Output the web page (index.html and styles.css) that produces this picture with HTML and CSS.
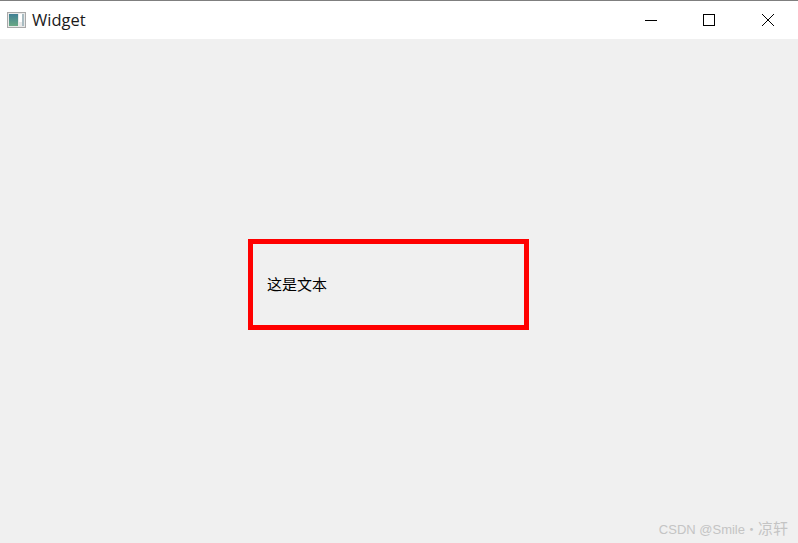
FILE: index.html
```html
<!DOCTYPE html>
<html lang="zh-CN">
<head>
    <meta charset="UTF-8">
    <title>Widget</title>
    <link rel="stylesheet" href="styles.css">
</head>
<body>

    <div class="window">
        <div class="titlebar">
            <svg class="app-icon" width="20" height="16" viewBox="0 0 20 16">
                <defs>
                    <linearGradient id="iconFill" x1="0" y1="0" x2="0" y2="1">
                        <stop offset="0" stop-color="#3f7f94"/>
                        <stop offset="1" stop-color="#6aa884"/>
                    </linearGradient>
                </defs>
                <rect x="0.5" y="0.5" width="18" height="15" fill="#e9e9e9" stroke="#a9a9a9"/>
                <rect x="2" y="2" width="9" height="12" fill="url(#iconFill)"/>
                <rect x="12" y="2" width="3" height="8" fill="#ffffff"/>
                <rect x="15" y="2" width="2" height="12" fill="#a9bcc2"/>
            </svg>
            <span class="title">Widget</span>
            <div class="controls">
                <div class="control">
                    <svg width="12" height="12" viewBox="0 0 12 12"><path d="M0 6.5H12" stroke="#000" fill="none"/></svg>
                </div>
                <div class="control">
                    <svg width="12" height="12" viewBox="0 0 12 12"><rect x="0.5" y="0.5" width="11" height="11" stroke="#000" fill="none"/></svg>
                </div>
                <div class="control close">
                    <svg width="12" height="12" viewBox="0 0 12 12"><path d="M0 0L12 12M12 0L0 12" stroke="#000" fill="none"/></svg>
                </div>
            </div>
        </div>
        <div class="client">
            <div class="label-box">这是文本</div>
        </div>
        <div class="watermark">CSDN @Smile・<span class="watermark-name">凉轩</span></div>
    </div>

</body>
</html>
```

FILE: styles.css
```css
html, body {
    margin: 0;
    height: 100%;
    overflow: hidden;
}
.window {
    position: relative;
    display: flex;
    flex-direction: column;
    height: 100%;
    background-color: #f0f0f0;
    font-family: "Liberation Sans", "Noto Sans CJK SC", sans-serif;
}
.titlebar {
    display: flex;
    align-items: center;
    height: 38px;
    background-color: #fff;
    border-top: 1px solid #7f7f7f;
    padding-left: 7px;
}
.app-icon {
    margin-right: 5px;
}
.title {
    font-family: "Open Sans", sans-serif;
    font-size: 16.5px;
    color: #1a1a1a;
    padding-bottom: 2px;
}
.controls {
    display: flex;
    margin-left: auto;
    margin-right: 1px;
}
.control {
    display: flex;
    align-items: center;
    justify-content: center;
    width: 58px;
    height: 38px;
}
.close {
    margin-left: 1px;
}
.client {
    flex: 1;
    padding: 200px 0 0 248px;
}
.label-box {
    display: flex;
    align-items: center;
    box-sizing: border-box;
    width: 281px;
    height: 91px;
    border: 5px solid #f00;
    padding: 0 0 2px 14px;
    font-family: "Noto Sans CJK SC", sans-serif;
    font-size: 15px;
    color: #000;
}
.watermark {
    position: absolute;
    right: 10px;
    bottom: 5px;
    font-size: 13px;
    color: #c4c4c4;
}
.watermark-name {
    font-size: 15px;
}
```
